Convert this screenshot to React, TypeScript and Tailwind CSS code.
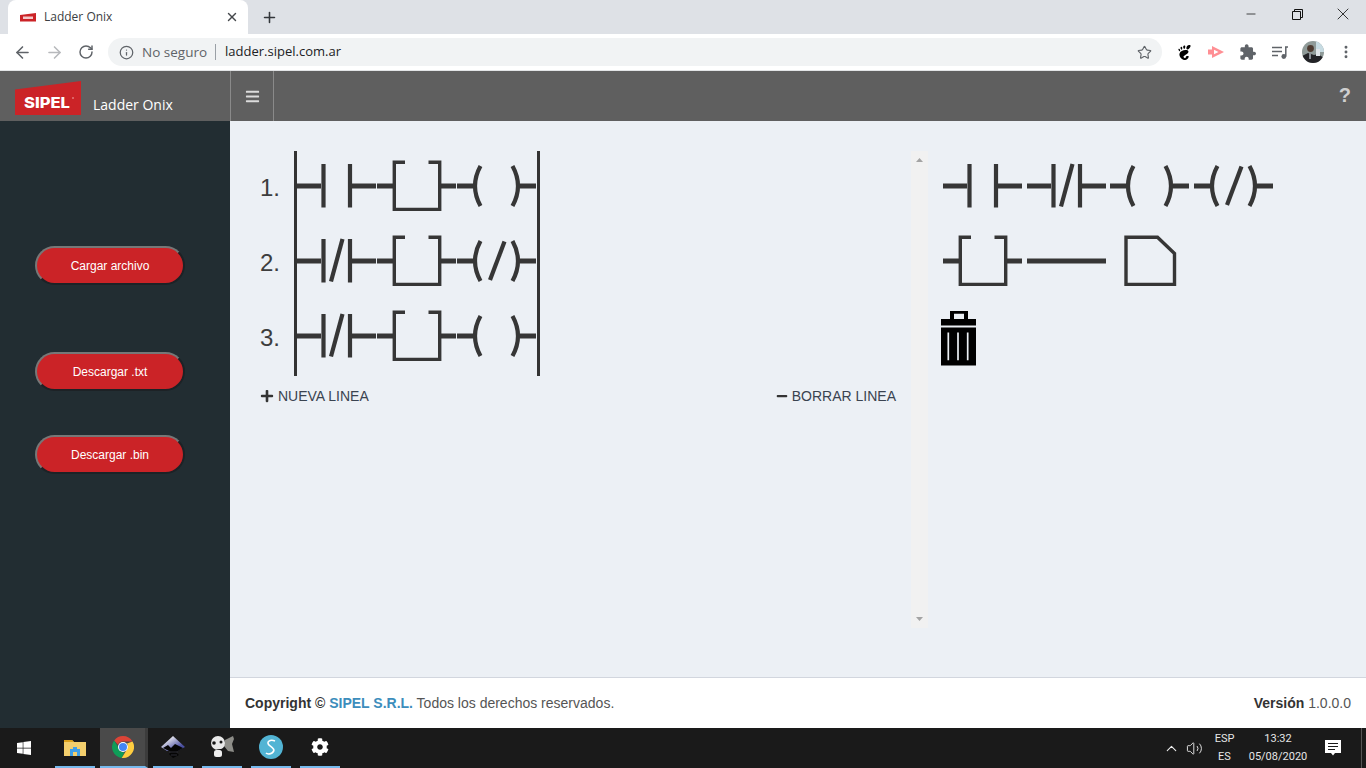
import React from 'react';
import { ArrowLeft, ArrowRight, ChevronUp, Info, Minus, MoreVertical, Plus, RotateCw, Star, Volume2, X } from 'lucide-react';
import { FaBars, FaCog, FaMinus, FaPlus, FaWindows } from 'react-icons/fa';
import { SiGnome } from 'react-icons/si';

const INK = '#363636';

// ladder symbols, all in a 80x75 cell
const Cell: React.FC<{ children: React.ReactNode }> = ({ children }) => (
  <svg width="80" height="75" viewBox="0 0 80 75" className="block shrink-0" fill="none" stroke={INK}>
    {children}
  </svg>
);

const Contact = ({ closed = false }: { closed?: boolean }) => (
  <Cell>
    <path d="M0 35H24M54 35H79" strokeWidth="5" />
    <path d="M26.5 13V56.5M53 13V56.5" strokeWidth="4.2" />
    {closed && <path d="M45.5 13L34 55.5" strokeWidth="4.2" />}
  </Cell>
);

const Box = () => (
  <Cell>
    <path d="M0 35H16M64 35H79" strokeWidth="5" />
    <path d="M28 11.2H17.3V58.4H62.7V11.2H51.5" strokeWidth="3.4" />
  </Cell>
);

const Coil = ({ closed = false }: { closed?: boolean }) => (
  <Cell>
    <path d="M0 35H16M63 35H79" strokeWidth="5" />
    <path d="M23.5 15Q12.5 35 23.5 55M55.5 15Q66.5 35 55.5 55" strokeWidth="4.2" />
    {closed && <path d="M47.5 15.5L33 54" strokeWidth="4.2" />}
  </Cell>
);

const Line = () => (
  <Cell>
    <path d="M0 35H79" strokeWidth="5" />
  </Cell>
);

const Page = () => (
  <Cell>
    <path d="M16 11.2H47.5L64.5 27.5V58.4H16Z" strokeWidth="3.4" />
  </Cell>
);

const Trash = () => (
  <svg width="35" height="55" viewBox="0 0 35 55" className="block">
    <path fill="#000" fillRule="evenodd" d="M9 0H27V8H35V14.5H0V8H9ZM13 2.8V8H23V2.8Z" />
    <rect y="16.5" width="35" height="38" fill="#000" />
    <path d="M7.3 21.6V49.3M17 21.6V49.3M26.7 21.6V49.3" stroke="#ecf0f5" strokeWidth="1.7" />
  </svg>
);

const RedButton = ({ label, className }: { label: string; className: string }) => (
  <button
    className={`h-[39px] w-[150px] rounded-[20px] border-2 border-t-[#777] border-l-[#777] border-r-[#1d2226] border-b-[#1d2226] bg-[#cb2327] text-[12px] text-white ${className}`}
  >
    {label}
  </button>
);

const BrowserChrome = () => (
  <div className="shrink-0 font-['Open_Sans',sans-serif]">
    <div className="flex h-[34px] items-end bg-[#dee1e6] pl-2">
      <div className="flex h-[34px] w-[240px] items-center rounded-t-[8px] bg-white pl-3 pr-[9px]">
        <svg width="16" height="9" viewBox="0 0 16 9">
          <path d="M0 2L16 0V8.5H0Z" fill="#cb2327" />
          <rect x="3" y="3.5" width="10" height="2.5" fill="#f4c9ca" />
        </svg>
        <span className="ml-2 flex-1 text-[12px] text-[#3c4043]">Ladder Onix</span>
        <X size={14} strokeWidth={2.4} color="#45484c" />
      </div>
      <div className="flex h-[34px] w-[43px] items-center justify-center">
        <Plus size={17} strokeWidth={2.2} color="#33373b" />
      </div>
      <div className="ml-auto flex h-[34px] items-start pt-[4px] text-[#111]">
        <div className="flex h-[20px] w-[46px] items-center justify-center"><Minus size={14} strokeWidth={1.3} /></div>
        <div className="flex h-[20px] w-[46px] items-center justify-center">
          <svg width="11" height="11" viewBox="0 0 11 11" fill="none" stroke="#111">
            <path d="M.5 2.5H8.5V10.5H.5ZM2.5 2.5V.5H10.5V8.5H8.5" />
          </svg>
        </div>
        <div className="flex h-[20px] w-[46px] items-center justify-center"><X size={20} strokeWidth={1} /></div>
      </div>
    </div>
    <div className="flex h-[36px] items-center bg-white">
      <div className="flex w-[108px] items-center pl-[13px] text-[#5f6368]">
        <ArrowLeft size={19} strokeWidth={2} />
        <ArrowRight size={19} strokeWidth={2} color="#b7b9bc" className="ml-[13px]" />
        <RotateCw size={16} strokeWidth={2.2} className="ml-[14px]" />
      </div>
      <div className="flex h-[28px] w-[1054px] items-center rounded-full bg-[#f1f3f4] pl-[11px] pr-[10px]">
        <Info size={15} strokeWidth={2} color="#5f6368" />
        <span className="ml-2 text-[13.5px] text-[#5f6368]">No seguro</span>
        <span className="ml-2 h-[16px] w-px bg-[#9aa0a6]" />
        <span className="ml-[9px] flex-1 text-[13px] text-[#202124]">ladder.sipel.com.ar</span>
        <Star size={15} strokeWidth={1.8} color="#5f6368" />
      </div>
      <div className="flex flex-1 items-center">
        <SiGnome size={15} color="#000" className="ml-[15px]" />
        <svg width="16" height="12" viewBox="0 0 16 12" className="ml-[16px]">
          <path d="M0 3.5H4V0L16 6L4 12V8.5H0Z" fill="#ff8f94" />
          <path d="M6 3.8L10.5 6L6 8.2Z" fill="#fff" />
        </svg>
        <svg width="16" height="16" viewBox="1.5 1 21.5 21" className="ml-[16px]">
          <path
            fill="#5f6368"
            d="M20.5 11H19V7c0-1.1-.9-2-2-2h-4V3.5C13 2.12 11.88 1 10.5 1S8 2.12 8 3.5V5H4c-1.1 0-1.99.9-1.99 2v3.8H3.5c1.49 0 2.7 1.21 2.7 2.7s-1.21 2.7-2.7 2.7H2V20c0 1.1.9 2 2 2h3.8v-1.5c0-1.49 1.21-2.7 2.7-2.7 1.49 0 2.7 1.21 2.7 2.7V22H17c1.1 0 2-.9 2-2v-4h1.5c1.38 0 2.5-1.12 2.5-2.5S21.88 11 20.5 11z"
          />
        </svg>
        <svg width="16" height="13" viewBox="0 0 16 13" className="ml-[16px]" fill="none" stroke="#5f6368" strokeWidth="1.5">
          <path d="M0 1.5H10M0 5.5H10M0 9.5H6M13.8 1.5V10.5M13 1H16" />
          <circle cx="11.8" cy="10.5" r="2.4" fill="#5f6368" stroke="none" />
        </svg>
        <svg width="22" height="22" viewBox="0 0 22 22" className="ml-[14px]">
          <clipPath id="avatar"><circle cx="11" cy="11" r="11" /></clipPath>
          <g clipPath="url(#avatar)">
            <rect width="22" height="22" fill="#8f9a98" />
            <rect x="14" width="8" height="11" fill="#c7dbe2" />
            <path d="M0 22V15L6 12L12 14L16 13L22 17V22Z" fill="#232327" />
            <circle cx="8.5" cy="7.5" r="3.4" fill="#4d3a30" />
            <rect x="14" y="8" width="4" height="7" fill="#dfe4e8" />
            <rect x="7" y="12" width="2" height="6" fill="#8a8f96" />
          </g>
        </svg>
        <MoreVertical size={16} strokeWidth={2.4} color="#5f6368" className="ml-[14px]" />
      </div>
    </div>
    <div className="h-px bg-[#e2e4e6]" />
  </div>
);

const AppHeader = () => (
  <div className="flex h-[50px] shrink-0 items-stretch bg-[#5f5f5f]">
    <div className="flex w-[231px] items-end border-r border-[#8a8a8a] pl-[15px]">
      <svg width="66" height="34" viewBox="0 0 66 34" className="mb-[6px] shrink-0">
        <path d="M0 8.5L66 0V34H0Z" fill="#cb2327" />
        <text
          x="9"
          y="27"
          fontFamily="'Inter',sans-serif"
          fontWeight="800"
          fontSize="15"
          fill="#fff"
          textLength="46"
          lengthAdjust="spacingAndGlyphs"
        >
          SIPEL
        </text>
        <circle cx="58" cy="17" r="0.8" fill="#f4b5b5" />
      </svg>
      <span className="mb-[6px] ml-3 font-['Open_Sans',sans-serif] text-[14px] font-normal text-white">Ladder Onix</span>
    </div>
    <div className="flex w-[43px] items-center justify-center border-r border-[#8a8a8a]">
      <FaBars size={15} color="#dcdcdc" />
    </div>
    <div className="ml-auto flex items-center pb-[2px] pr-[15px] font-['Liberation_Sans',sans-serif] text-[20px] font-bold text-[#cfcfcf]">?</div>
  </div>
);

const Sidebar = () => (
  <div className="flex w-[230px] shrink-0 flex-col items-start bg-[#222d32] pl-[35px] pt-[125px] font-['Liberation_Sans',sans-serif]">
    <RedButton label="Cargar archivo" className="" />
    <RedButton label="Descargar .txt" className="mt-[67px]" />
    <RedButton label="Descargar .bin" className="mt-[44px]" />
  </div>
);

const RowNumber = ({ n }: { n: number }) => (
  <div className="flex h-[75px] items-center pb-[2px] text-[24px] text-[#3d3d3d]">{n}.</div>
);

const Scrollbar = () => (
  <div className="mt-[30px] flex h-[477px] w-[17px] shrink-0 flex-col items-center justify-between bg-[#f1f1f1] py-[7px]">
    <svg width="7" height="4" viewBox="0 0 7 4"><path d="M3.5 0L7 4H0Z" fill="#a3a3a3" /></svg>
    <svg width="7" height="4" viewBox="0 0 7 4"><path d="M3.5 4L7 0H0Z" fill="#a3a3a3" /></svg>
  </div>
);

const Main = () => (
  <div className="flex min-w-0 flex-1 flex-col font-['Liberation_Sans',sans-serif]">
    <div className="flex flex-1 items-start bg-[#ecf0f5]">
      <div className="w-[681px] pl-[30px] pr-[15px] pt-[30px]">
        <div className="flex">
          <div className="w-[34px]">
            <RowNumber n={1} />
            <RowNumber n={2} />
            <RowNumber n={3} />
          </div>
          <div className="border-x-[3px] border-[#333]">
            <div className="flex"><Contact /><Box /><Coil /></div>
            <div className="flex"><Contact closed /><Box /><Coil closed /></div>
            <div className="flex"><Contact closed /><Box /><Coil /></div>
          </div>
        </div>
        <div className="mt-[10px] flex h-[20px] items-center justify-between text-[14px] text-[#3a4350]">
          <div className="flex items-center">
            <FaPlus size={14} color="#333" className="mr-[4px]" />
            NUEVA LINEA
          </div>
          <div className="flex items-center">
            <FaMinus size={12} color="#333" className="mr-[4px]" />
            BORRAR LINEA
          </div>
        </div>
      </div>
      <Scrollbar />
      <div className="pl-[15px] pt-[30px]">
        <div className="flex gap-[3.5px]"><Contact /><Contact closed /><Coil /><Coil closed /></div>
        <div className="flex gap-[3.5px]"><Box /><Line /><Page /></div>
        <div className="-ml-[2px] mt-[10px]"><Trash /></div>
      </div>
    </div>
    <div className="flex h-[51px] shrink-0 items-center justify-between border-t border-[#d2d6de] bg-white px-[15px] text-[14px] text-[#555]">
      <div>
        <span className="font-bold text-[#333]">Copyright © </span>
        <span className="font-bold text-[#3c8dbc]">SIPEL S.R.L.</span> Todos los derechos reservados.
      </div>
      <div>
        <span className="font-bold text-[#333]">Versión</span> 1.0.0.0
      </div>
    </div>
  </div>
);

const ChromeLogo = () => (
  <svg width="22" height="22" viewBox="0 0 22 22">
    <path d="M11 0A11 11 0 0 1 20.5 5.5H11A5.5 5.5 0 0 0 6 8.8L2.2 4.4A11 11 0 0 1 11 0Z" fill="#db4437" />
    <path d="M2.2 4.4L6.4 11.5A5.5 5.5 0 0 0 12.5 16.3L9.7 21.9A11 11 0 0 1 2.2 4.4Z" fill="#0f9d58" />
    <path d="M20.5 5.5A11 11 0 0 1 9.7 21.9L14.6 14A5.5 5.5 0 0 0 15 7.5Z" fill="#ffcd40" />
    <circle cx="11" cy="11" r="5" fill="#fff" />
    <circle cx="11" cy="11" r="4" fill="#4285f4" />
  </svg>
);

const InkscapeLogo = () => (
  <svg width="24" height="22" viewBox="0 0 24 22">
    <defs>
      <linearGradient id="ink" x1="0" y1="0" x2="1" y2="1">
        <stop offset="0.2" stopColor="#f2f2f6" />
        <stop offset="0.75" stopColor="#4a4fa0" />
      </linearGradient>
    </defs>
    <path d="M12 0L24 11L16 15L6 15L0 11Z" fill="url(#ink)" />
    <path d="M2 12L7 9L10 12L14 8L22 12L15 16L18 19L12 22L8 18L10 16Z" fill="#050505" />
    <path d="M8 16H17M10 19H16" stroke="#2c2c34" strokeWidth="1" />
  </svg>
);

const GimpLogo = () => (
  <svg width="24" height="22" viewBox="0 0 24 22">
    <path d="M15 4L23 0L24 3L22 8L24 16L18 15L14 10Z" fill="#8d8d88" />
    <circle cx="8" cy="7" r="7" fill="#e9e9e9" />
    <circle cx="4" cy="7" r="1.8" fill="#151515" />
    <circle cx="11" cy="6" r="1.5" fill="#151515" />
    <path d="M6 13.5L15 12.5L11 15Z" fill="#151515" />
    <rect x="4" y="14" width="8" height="7" rx="2.5" fill="#eeeeee" />
  </svg>
);

const TaskItem = ({ children, className }: { children: React.ReactNode; className: string }) => (
  <div className={`flex h-[40px] items-center justify-center border-b-[2px] border-[#76b9ed] ${className}`}>{children}</div>
);

const Taskbar = () => (
  <div className="flex h-[40px] shrink-0 items-center bg-[#1a1a1a] font-['Roboto',sans-serif] text-[11px] text-[#e6e6e6]">
    <div className="flex w-[48px] justify-center"><FaWindows size={16} color="#fff" /></div>
    <TaskItem className="ml-[7px] w-[40px]">
      <svg width="22" height="18" viewBox="0 0 22 18">
        <path d="M0 2H8L10 4H22V18H0Z" fill="#f3cf6d" />
        <path d="M0 2H8L10 4H0Z" fill="#dca21d" />
        <path d="M6 11H9V9H13V11H16V18H13V14H9V18H6Z" fill="#3f9fe8" />
      </svg>
    </TaskItem>
    <TaskItem className="ml-[5px] w-[48px] border-r-[3px] border-r-[#3c3c3c] bg-[#4a4a4a]"><ChromeLogo /></TaskItem>
    <TaskItem className="ml-[5px] w-[40px]"><InkscapeLogo /></TaskItem>
    <TaskItem className="ml-[9px] w-[40px]"><GimpLogo /></TaskItem>
    <TaskItem className="ml-[9px] w-[40px]">
      <svg width="24" height="24" viewBox="0 0 24 24">
        <circle cx="12" cy="12" r="12" fill="#52b4d4" />
        <path d="M16 6C11 4 7 7 10 10C14 13 17 15 13 18C11 19.5 8 19 7 18" fill="none" stroke="#fff" strokeWidth="1.6" />
      </svg>
    </TaskItem>
    <TaskItem className="ml-[9px] w-[40px]"><FaCog size={18} color="#fff" /></TaskItem>
    <div className="ml-auto flex items-center">
      <ChevronUp size={17} strokeWidth={1.5} color="#eee" />
      <Volume2 size={17} strokeWidth={1.3} color="#eee" className="ml-[6px]" />
      <div className="ml-[11px] flex w-[21px] flex-col items-center leading-[18px]">
        <span>ESP</span>
        <span>ES</span>
      </div>
      <div className="ml-[13px] flex w-[60px] flex-col items-center leading-[18px]">
        <span>13:32</span>
        <span>05/08/2020</span>
      </div>
      <svg width="16" height="16" viewBox="0 0 16 16" className="ml-[17px]">
        <path d="M0 0H16V13H10L8 15.5L6 13H0Z" fill="#fff" />
        <path d="M3 3.5H13M3 6.5H13M3 9.5H10" stroke="#1a1a1a" strokeWidth="1" />
      </svg>
      <div className="ml-[20px] mr-[4px] h-[40px] w-px bg-[#555]" />
    </div>
  </div>
);

export default function App() {
  return (
    <div className="flex h-[768px] w-full flex-col overflow-hidden bg-white">
      <BrowserChrome />
      <AppHeader />
      <div className="flex min-h-0 flex-1">
        <Sidebar />
        <Main />
      </div>
      <Taskbar />
    </div>
  );
}
